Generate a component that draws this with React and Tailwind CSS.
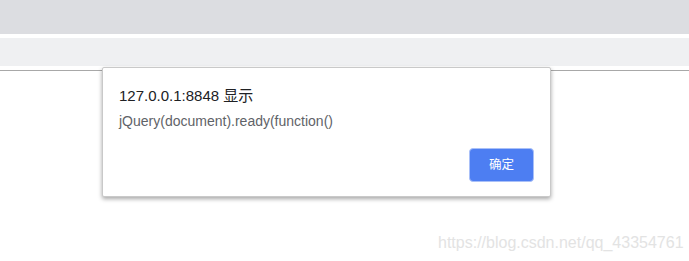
export default function App() {
  return (
    <div className="relative h-[261px] w-[689px] overflow-hidden bg-white font-['Liberation_Sans','Noto_Sans_CJK_SC',sans-serif]">
      <div className="h-[34px] bg-[#dcdde1]" />
      <div className="mt-[4px] h-[28px] bg-[#eff0f2]" />
      <div className="mt-[4px] h-px bg-[#a8a8a8]" />

      {/* alert dialog */}
      <div className="absolute left-[102px] top-[67px] flex h-[130px] w-[449px] flex-col rounded-[2px] border border-[#c9c9c9] bg-white px-[16px] pt-[18px] shadow-[0_2px_4px_rgba(0,0,0,0.35)]">
        <div className="text-[15px] leading-[20px] text-[#202124]">127.0.0.1:8848 显示</div>
        <div className="mt-[6px] text-[14px] leading-[18px] text-[#5f6368]">jQuery(document).ready(function()</div>
        <div className="mt-auto mb-[14px] flex justify-end">
          <button className="h-[34px] w-[65px] rounded-[4px] border border-[#a9c0f8] bg-[#4d7ef2] text-[12.5px] text-white">确定</button>
        </div>
      </div>

      <div className="absolute left-[438px] top-[233px] text-[16px] leading-[20px] text-[#e3e3e3]">https://blog.csdn.net/qq_43354761</div>
    </div>
  )
}
